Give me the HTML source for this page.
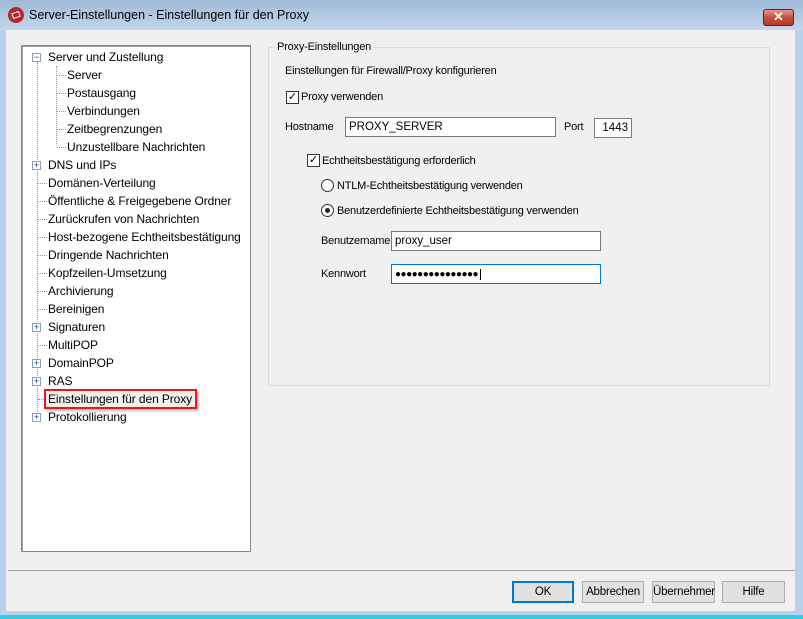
<!DOCTYPE html>
<html><head><meta charset="utf-8"><style>
*{margin:0;padding:0;box-sizing:border-box}
body{width:803px;height:619px;overflow:hidden;background:#b9d1ea;font-family:"Liberation Sans",sans-serif;font-size:12px;color:#000;position:relative}
.a{position:absolute;white-space:nowrap}
.r{font-size:11px;letter-spacing:-0.2px}
#tb{left:0;top:0;width:803px;height:30px;background:linear-gradient(#9fbad8,#c2d6ec)}
#cl{left:6px;top:30px;width:789px;height:581px;background:#f0f0f0}
#bb{left:0;top:615px;width:803px;height:4px;background:#2fd0e6}
.tree{left:21px;top:45px;width:230px;height:507px;background:#fff;border:1px solid #828790;box-shadow:inset 1px 1px 0 #a0a0a0}
.ti{font-size:12px;letter-spacing:-0.1px}
.pm{width:9px;height:9px;border:1px solid #8d9fb7;background:#fff;font-size:9px;line-height:7px;text-align:center;color:#1c3b8d}
.vd{border-left:1px dotted #999;width:1px}
.hd{border-top:1px dotted #999;height:1px}
.inp{background:#fff;border:1px solid #7a7a7a;height:20px;padding:3px 3px;font-size:11.5px}
.btn{top:581px;height:22px;background:#e1e1e1;border:1px solid #adadad;text-align:center;line-height:20px;font-size:11.5px;letter-spacing:-0.2px}
.cb{width:13px;height:13px;border:1px solid #333;background:#fff;font-size:11px;line-height:11px;text-align:center}
.rb{width:13px;height:13px;border:1px solid #333;border-radius:50%;background:#fff}
</style></head><body>
<div class="a" id="tb"></div>
<div class="a" style="left:8px;top:7px;width:16px;height:16px;border-radius:50%;background:#b3262b"></div>
<div class="a" style="left:12px;top:12px;width:8px;height:6px;border:1px solid #fff;transform:rotate(-20deg)"></div>
<div class="a" style="left:29px;top:8px;font-size:12.5px">Server-Einstellungen - Einstellungen für den Proxy</div>
<div class="a" style="left:763px;top:9px;width:31px;height:17px;border:1px solid #5b2020;border-radius:3px;background:linear-gradient(#e39a8e,#c4503e 50%,#b83c2a);color:#fff;font-weight:bold;text-align:center;line-height:14px;font-size:13px">✕</div>
<div class="a" id="cl"></div>
<div class="a" id="bb"></div>

<div class="a tree"></div>
<div class="a vd" style="left:37px;top:62px;height:356px"></div>
<div class="a vd" style="left:56px;top:66px;height:80px"></div>
<div class="a pm" style="left:32px;top:53px">−</div>
<div class="a ti" style="left:48px;top:50px">Server und Zustellung</div>
<div class="a hd" style="left:57px;top:75px;width:9px"></div><div class="a ti" style="left:67px;top:68px">Server</div>
<div class="a hd" style="left:57px;top:93px;width:9px"></div><div class="a ti" style="left:67px;top:86px">Postausgang</div>
<div class="a hd" style="left:57px;top:111px;width:9px"></div><div class="a ti" style="left:67px;top:104px">Verbindungen</div>
<div class="a hd" style="left:57px;top:129px;width:9px"></div><div class="a ti" style="left:67px;top:122px">Zeitbegrenzungen</div>
<div class="a hd" style="left:57px;top:147px;width:9px"></div><div class="a ti" style="left:67px;top:140px">Unzustellbare Nachrichten</div>

<div class="a pm" style="left:32px;top:161px">+</div><div class="a ti" style="left:48px;top:158px">DNS und IPs</div>
<div class="a hd" style="left:38px;top:183px;width:9px"></div><div class="a ti" style="left:48px;top:176px">Domänen-Verteilung</div>
<div class="a hd" style="left:38px;top:201px;width:9px"></div><div class="a ti" style="left:48px;top:194px">Öffentliche &amp; Freigegebene Ordner</div>
<div class="a hd" style="left:38px;top:219px;width:9px"></div><div class="a ti" style="left:48px;top:212px">Zurückrufen von Nachrichten</div>
<div class="a hd" style="left:38px;top:237px;width:9px"></div><div class="a ti" style="left:48px;top:230px">Host-bezogene Echtheitsbestätigung</div>
<div class="a hd" style="left:38px;top:255px;width:9px"></div><div class="a ti" style="left:48px;top:248px">Dringende Nachrichten</div>
<div class="a hd" style="left:38px;top:273px;width:9px"></div><div class="a ti" style="left:48px;top:266px">Kopfzeilen-Umsetzung</div>
<div class="a hd" style="left:38px;top:291px;width:9px"></div><div class="a ti" style="left:48px;top:284px">Archivierung</div>
<div class="a hd" style="left:38px;top:309px;width:9px"></div><div class="a ti" style="left:48px;top:302px">Bereinigen</div>
<div class="a pm" style="left:32px;top:323px">+</div><div class="a ti" style="left:48px;top:320px">Signaturen</div>
<div class="a hd" style="left:38px;top:345px;width:9px"></div><div class="a ti" style="left:48px;top:338px">MultiPOP</div>
<div class="a pm" style="left:32px;top:359px">+</div><div class="a ti" style="left:48px;top:356px">DomainPOP</div>
<div class="a pm" style="left:32px;top:377px">+</div><div class="a ti" style="left:48px;top:374px">RAS</div>
<div class="a hd" style="left:38px;top:399px;width:6px"></div>
<div class="a" style="left:44px;top:389px;width:153px;height:20px;border:2px solid #e8171b;background:#f0f0f0;box-shadow:2px 2px 2px #bbb"></div>
<div class="a ti" style="left:48px;top:392px">Einstellungen für den Proxy</div>
<div class="a pm" style="left:32px;top:413px">+</div><div class="a ti" style="left:48px;top:410px">Protokollierung</div>

<div class="a" style="left:268px;top:47px;width:502px;height:339px;border:1px solid #dcdcdc"></div>
<div class="a r" style="left:275px;top:41px;background:#f0f0f0;padding:0 2px">Proxy-Einstellungen</div>
<div class="a r" style="left:285px;top:65px">Einstellungen für Firewall/Proxy konfigurieren</div>
<div class="a cb" style="left:286px;top:91px">✓</div><div class="a r" style="left:301px;top:91px">Proxy verwenden</div>
<div class="a r" style="left:285px;top:121px">Hostname</div>
<div class="a inp" style="left:345px;top:117px;width:211px">PROXY_SERVER</div>
<div class="a r" style="left:564px;top:121px">Port</div>
<div class="a inp" style="left:594px;top:118px;width:38px;text-align:right">1443</div>
<div class="a cb" style="left:307px;top:154px">✓</div><div class="a r" style="left:322px;top:155px">Echtheitsbestätigung erforderlich</div>
<div class="a rb" style="left:321px;top:179px"></div><div class="a r" style="left:337px;top:180px">NTLM-Echtheitsbestätigung verwenden</div>
<div class="a rb" style="left:321px;top:204px"></div><div class="a" style="left:325px;top:208px;width:5px;height:5px;border-radius:50%;background:#222"></div>
<div class="a r" style="left:337px;top:205px">Benutzerdefinierte Echtheitsbestätigung verwenden</div>
<div class="a r" style="left:321px;top:235px">Benutzername</div>
<div class="a inp" style="left:391px;top:231px;width:210px">proxy_user</div>
<div class="a r" style="left:321px;top:268px">Kennwort</div>
<div class="a inp" style="left:391px;top:264px;width:210px;border-color:#0078d7;font-size:10px;letter-spacing:-0.5px;line-height:13px">●●●●●●●●●●●●●●●<span style="border-left:1px solid #000;margin-left:2px"></span></div>

<div class="a" style="left:8px;top:570px;width:787px;height:1px;background:#a0a0a0"></div>
<div class="a btn" style="left:512px;width:62px;border:2px solid #0078d7;line-height:18px">OK</div>
<div class="a btn" style="left:582px;width:62px">Abbrechen</div>
<div class="a btn" style="left:652px;width:63px">Übernehmer</div>
<div class="a btn" style="left:722px;width:63px">Hilfe</div>
</body></html>
